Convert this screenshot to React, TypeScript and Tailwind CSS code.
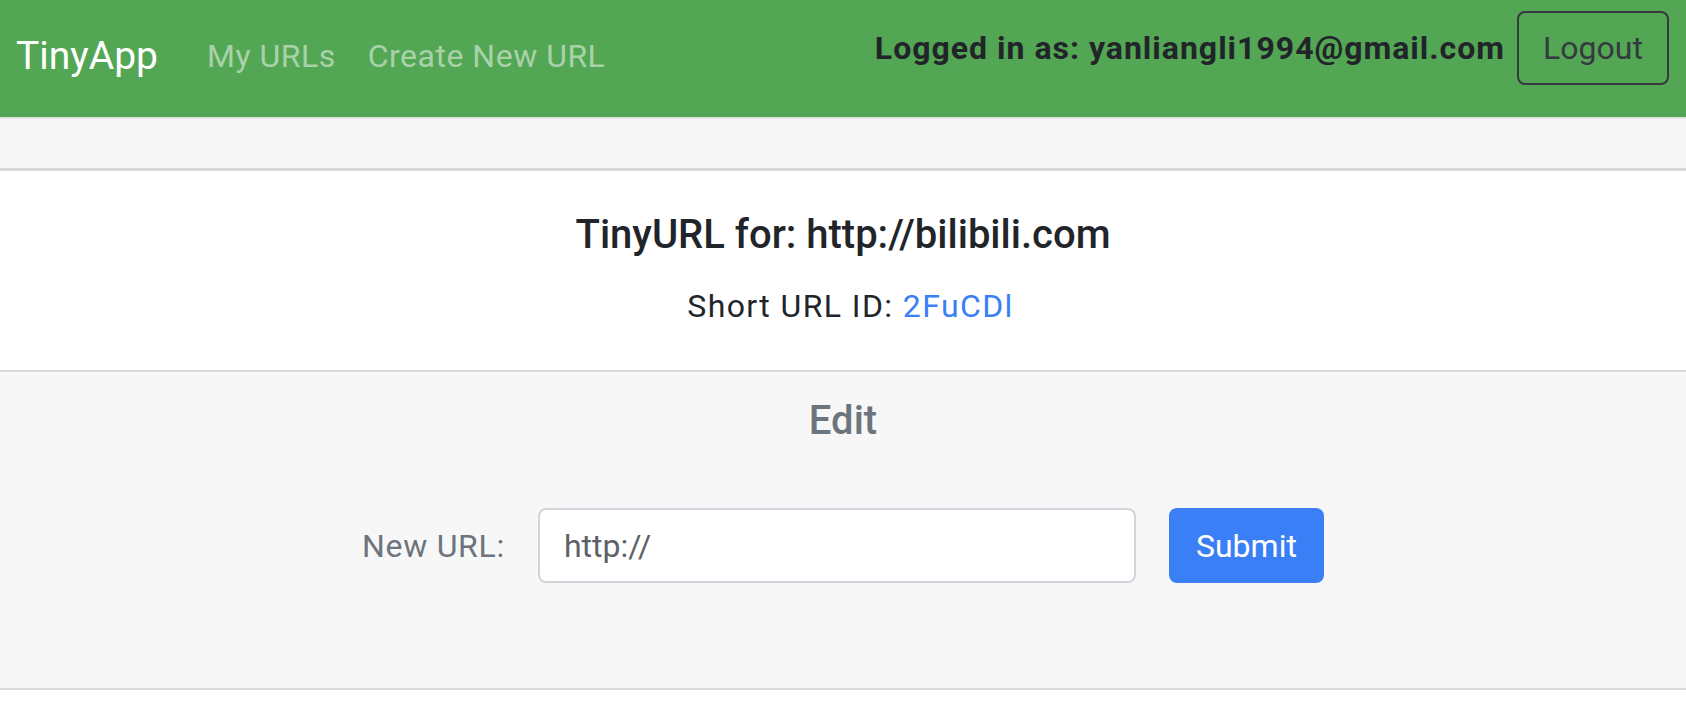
export default function App() {
  return (
    <div className="min-h-screen bg-white font-['Roboto','Liberation_Sans',sans-serif] text-[#212529]">
      {/* Navbar */}
      <nav className="h-[117px] bg-[#53a653] flex items-start justify-between pl-[16px] pr-[17px]">
        <div className="h-[112px] flex items-center">
          <a className="text-[39px] text-white mr-[49px]">TinyApp</a>
          <a className="text-[32px] text-white/50 tracking-[0.5px] mr-[32px]">My URLs</a>
          <a className="text-[32px] text-white/50 tracking-[0.5px]">Create New URL</a>
        </div>
        <div className="h-[96px] flex items-center">
          <span className="text-[32px] font-bold text-[#212529] tracking-[1px] mr-[12px]">
            Logged in as: yanliangli1994@gmail.com
          </span>
          <button className="w-[152px] h-[74px] border-2 border-[#343a40] rounded-[8px] text-[32px] text-[#343a40]">
            Logout
          </button>
        </div>
      </nav>

      {/* Card */}
      <div className="text-center">
        <div className="h-[54px] bg-[#f7f7f7] border-t-2 border-b-[3px] border-t-[#e2e2e2] border-b-[#d9d9d9]" />

        <div className="h-[199px] bg-white pt-[40px]">
          <h5 className="text-[40px] font-medium leading-[48px]">TinyURL for: http://bilibili.com</h5>
          <p className="mt-[23px] pl-[15px] text-[32px] leading-[48px] tracking-[1.4px]">
            Short URL ID: <a className="text-[#3a7ff6]">2FuCDl</a>
          </p>
        </div>

        <div className="h-[320px] bg-[#f7f7f7] border-t-2 border-b-2 border-[#d9d9d9] pt-[25px]">
          <h2 className="text-[40px] font-medium leading-[48px] text-[#6c757d]">Edit</h2>
          <form className="mt-[63px] flex items-center justify-center">
            <label className="text-[32px] text-[#6c757d] tracking-[0.7px] mr-[33px]">New URL:</label>
            <input
              type="text"
              defaultValue="http://"
              className="w-[598px] h-[75px] bg-white border-2 border-[#d1d5db] rounded-[8px] pl-[24px] text-[32px] text-[#5b6167] outline-none"
            />
            <button
              type="button"
              className="ml-[33px] w-[155px] h-[75px] bg-[#3a7ff6] rounded-[8px] text-[32px] text-white"
            >
              Submit
            </button>
          </form>
        </div>
      </div>
    </div>
  );
}
